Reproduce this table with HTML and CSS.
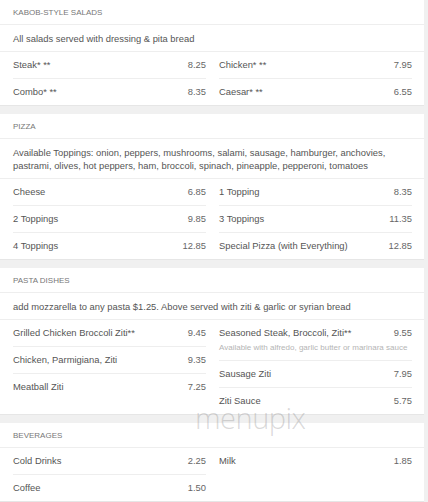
FILE: index.html
```html
<!DOCTYPE html>
<html lang="en">
<head>
  <meta charset="UTF-8" />
  <title>Menu</title>
  <link rel="stylesheet" href="styles.css">
</head>
<body>
  <div class="menu">

    <div class="section">
      <div class="section-title">KABOB-STYLE SALADS</div>
      <div class="section-desc">All salads served with dressing &amp; pita bread</div>
      <div class="items">
        <div class="col">
          <div class="item"><span class="name">Steak* **</span><span class="price">8.25</span></div>
          <div class="item"><span class="name">Combo* **</span><span class="price">8.35</span></div>
        </div>
        <div class="col">
          <div class="item"><span class="name">Chicken* **</span><span class="price">7.95</span></div>
          <div class="item"><span class="name">Caesar* **</span><span class="price">6.55</span></div>
        </div>
      </div>
    </div>

    <div class="section">
      <div class="section-title">PIZZA</div>
      <div class="section-desc">Available Toppings: onion, peppers, mushrooms, salami, sausage, hamburger, anchovies, pastrami, olives, hot peppers, ham, broccoli, spinach, pineapple, pepperoni, tomatoes</div>
      <div class="items">
        <div class="col">
          <div class="item"><span class="name">Cheese</span><span class="price">6.85</span></div>
          <div class="item"><span class="name">2 Toppings</span><span class="price">9.85</span></div>
          <div class="item"><span class="name">4 Toppings</span><span class="price">12.85</span></div>
        </div>
        <div class="col">
          <div class="item"><span class="name">1 Topping</span><span class="price">8.35</span></div>
          <div class="item"><span class="name">3 Toppings</span><span class="price">11.35</span></div>
          <div class="item"><span class="name">Special Pizza (with Everything)</span><span class="price">12.85</span></div>
        </div>
      </div>
    </div>

    <div class="section">
      <div class="section-title">PASTA DISHES</div>
      <div class="section-desc">add mozzarella to any pasta $1.25. Above served with ziti &amp; garlic or syrian bread</div>
      <div class="items">
        <div class="col">
          <div class="item"><span class="name">Grilled Chicken Broccoli Ziti**</span><span class="price">9.45</span></div>
          <div class="item"><span class="name">Chicken, Parmigiana, Ziti</span><span class="price">9.35</span></div>
          <div class="item"><span class="name">Meatball Ziti</span><span class="price">7.25</span></div>
        </div>
        <div class="col">
          <div class="item">
            <span class="name">Seasoned Steak, Broccoli, Ziti**</span><span class="price">9.55</span>
            <div class="note">Available with alfredo, garlic butter or marinara sauce</div>
          </div>
          <div class="item"><span class="name">Sausage Ziti</span><span class="price">7.95</span></div>
          <div class="item"><span class="name">Ziti Sauce</span><span class="price">5.75</span></div>
        </div>
      </div>
    </div>

    <div class="section">
      <div class="section-title">BEVERAGES</div>
      <div class="items">
        <div class="col">
          <div class="item"><span class="name">Cold Drinks</span><span class="price">2.25</span></div>
          <div class="item"><span class="name">Coffee</span><span class="price">1.50</span></div>
        </div>
        <div class="col">
          <div class="item"><span class="name">Milk</span><span class="price">1.85</span></div>
        </div>
      </div>
    </div>

  </div>
  <div class="watermark">menupix</div>
</body>
</html>
```

FILE: styles.css
```css
* {
  box-sizing: border-box;
}

html, body {
  margin: 0;
  padding: 0;
  background: #f0f0f0;
  font-family: "Liberation Sans", Arial, sans-serif;
  color: #555;
}

body {
  position: relative;
  overflow: hidden;
}

.menu {
  width: 424px;
  display: flex;
  flex-direction: column;
  gap: 8px;
}

.section {
  background: #fff;
  border-bottom: 1px solid #e6e6e6;
}

.section-title {
  padding: 8px 13px 6px;
  font-size: 8px;
  line-height: 10px;
  color: #777;
  border-bottom: 1px solid #eee;
}

.section-desc {
  padding: 7px 13px 6px;
  font-size: 9.4px;
  line-height: 13px;
  color: #555;
  border-bottom: 1px solid #eee;
}

.items {
  display: grid;
  grid-template-columns: 1fr 1fr;
  column-gap: 13px;
  padding: 0 12px 0 13px;
}

.item {
  display: flex;
  flex-wrap: wrap;
  justify-content: space-between;
  padding: 7px 0;
  font-size: 9.4px;
  line-height: 12px;
  border-bottom: 1px solid #eee;
}

.item:last-child {
  border-bottom: none;
}

.price {
  color: #666;
}

.note {
  width: 100%;
  margin-top: 3px;
  font-size: 8px;
  line-height: 11px;
  color: #b5b5b5;
}

.watermark {
  position: absolute;
  left: 195px;
  top: 398px;
  font-family: "Open Sans", sans-serif;
  font-weight: 300;
  font-size: 29px;
  letter-spacing: -0.5px;
  color: rgba(120, 120, 120, 0.28);
}
```
